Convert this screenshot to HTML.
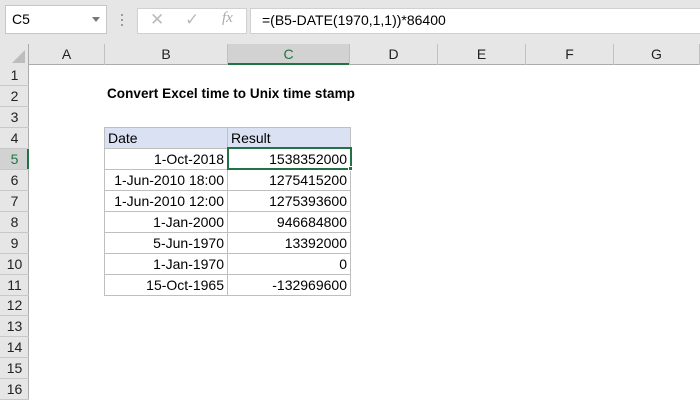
<!DOCTYPE html>
<html><head><style>
*{margin:0;padding:0;box-sizing:border-box}
body{width:700px;height:400px;overflow:hidden;background:#fff;font-family:"Liberation Sans",Calibri,sans-serif;font-size:13px;position:relative;color:#000}
.a{position:absolute}
</style></head><body>
<div class="a" style="left:0;top:0;width:700px;height:44px;background:#e6e6e6"></div>
<div class="a" style="left:5px;top:5px;width:102px;height:29px;background:#fff;border:1px solid #c6c6c6"></div>
<div class="a" style="left:12px;top:11px;font-size:14px">C5</div>
<div class="a" style="left:92px;top:17px;width:0;height:0;border-left:4px solid transparent;border-right:4px solid transparent;border-top:5px solid #777"></div>
<div class="a" style="left:121px;top:14px;width:2px;height:2px;background:#999;box-shadow:0 5px #999,0 10px #999"></div>
<div class="a" style="left:137px;top:8px;width:110px;height:26px;background:#fff;border:1px solid #d0d0d0"></div>
<div class="a" style="left:150px;top:10px;font-size:17px;color:#bbb">✕</div>
<div class="a" style="left:185px;top:10px;font-size:17px;color:#bbb">✓</div>
<div class="a" style="left:222px;top:10px;font-size:15px;color:#aaa;font-style:italic;font-family:'Liberation Serif',serif">fx</div>
<div class="a" style="left:250px;top:8px;width:460px;height:26px;background:#fff;border:1px solid #d0d0d0"></div>
<div class="a" style="left:262px;top:12px;font-size:14px">=(B5-DATE(1970,1,1))*86400</div>

<div class="a" style="left:0;top:44px;width:700px;height:21px;background:#e6e6e6;border-bottom:1px solid #ababab"></div>
<div class="a" style="left:0;top:44px;width:29px;height:356px;background:#e6e6e6;border-right:1px solid #ababab"></div>
<div class="a" style="left:12px;top:50px;width:0;height:0;border-left:13px solid transparent;border-bottom:13px solid #bdbdbd"></div>
<div class="a" style="left:228px;top:44px;width:122px;height:21px;background:#d2d2d2;border-bottom:2px solid #217346"></div>
<div class="a" style="left:0;top:148px;width:29px;height:21px;background:#d2d2d2;border-right:2px solid #217346"></div>
<div id="hdr"></div>
<div id="rows"></div>

<div class="a" style="left:107px;top:86px;font-weight:bold;font-size:13.5px;letter-spacing:0.05px">Convert Excel time to Unix time stamp</div>
<div id="tbl"></div>
<script>
var cols=[[29,105,'A'],[105,228,'B'],[228,350,'C'],[350,438,'D'],[438,526,'E'],[526,614,'F'],[614,700,'G']],h='';
cols.forEach(function(c){h+='<div class="a" style="left:'+c[0]+'px;top:44px;width:'+(c[1]-c[0])+'px;height:21px;border-right:1px solid #c0c0c0;text-align:center;line-height:21px;font-size:14px;color:'+(c[2]=='C'?'#217346':'#222')+'">'+c[2]+'</div>'});
document.getElementById('hdr').innerHTML=h;h='';
for(var i=1;i<=16;i++){var t=65+(i-1)*20.95;h+='<div class="a" style="left:0;top:'+t+'px;width:29px;height:21px;border-bottom:1px solid #c8c8c8;text-align:center;line-height:21px;font-size:14px;color:'+(i==5?'#217346':'#222')+'">'+i+'</div>'}
document.getElementById('rows').innerHTML=h;h='';
var d=[['Date','Result'],['1-Oct-2018','1538352000'],['1-Jun-2010 18:00','1275415200'],['1-Jun-2010 12:00','1275393600'],['1-Jan-2000','946684800'],['5-Jun-1970','13392000'],['1-Jan-1970','0'],['15-Oct-1965','-132969600']];
d.forEach(function(r,j){var t=127+j*21,bg=j==0?'#d9e1f2':'#fff',al=j==0?'left':'right';
h+='<div class="a" style="left:104px;top:'+t+'px;width:124px;height:22px;border:1px solid #bfbfbf;background:'+bg+';text-align:'+al+';padding:0 3px;line-height:20px;font-size:14px">'+r[0]+'</div>';
h+='<div class="a" style="left:227px;top:'+t+'px;width:124px;height:22px;border:1px solid #bfbfbf;background:'+bg+';text-align:'+al+';padding:0 3px;line-height:20px;font-size:14px">'+r[1]+'</div>'});
h+='<div class="a" style="left:227px;top:147px;width:125px;height:23px;border:2px solid #217346"></div><div class="a" style="left:348px;top:166px;width:5px;height:5px;background:#217346;border:1px solid #fff"></div>';
document.getElementById('tbl').innerHTML=h;
</script>
</body></html>
